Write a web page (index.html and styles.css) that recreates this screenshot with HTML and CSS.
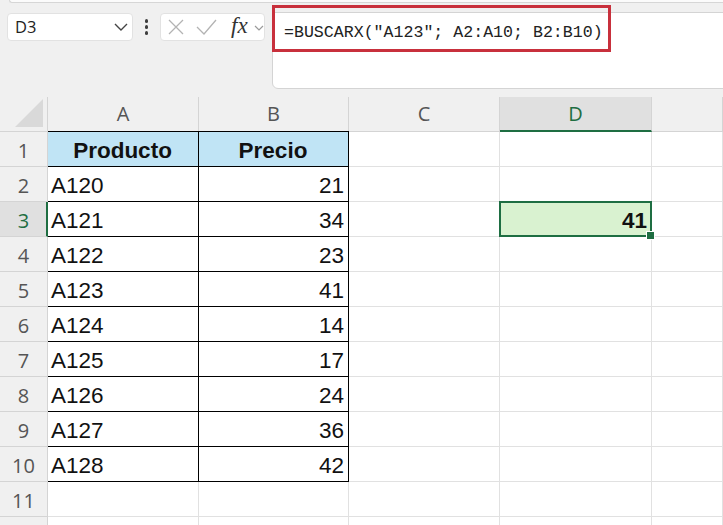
FILE: index.html
```html
<!DOCTYPE html>
<html lang="es">
<head>
<meta charset="utf-8">
<title>BUSCARX</title>
<link rel="stylesheet" href="styles.css">
</head>
<body>
<div class="app">
  <div class="ribbon-edge"></div>
  <div class="fbar">
    <div class="namebox">
      <span class="nb-text">D3</span>
      <svg class="nb-chev" width="14" height="8" viewBox="0 0 14 8"><polyline points="1,1 7,7 13,1" fill="none" stroke="#444" stroke-width="1.4"/></svg>
    </div>
    <div class="dots"><i></i><i></i><i></i></div>
    <div class="fxbox">
      <svg class="ic-x" width="16" height="16" viewBox="0 0 16 16"><path d="M1 1 L15 15 M15 1 L1 15" stroke="#b3b3b3" stroke-width="1.3" fill="none"/></svg>
      <svg class="ic-ok" width="21" height="16" viewBox="0 0 21 16"><polyline points="1,8 8,15 20,1" fill="none" stroke="#b3b3b3" stroke-width="1.3"/></svg>
      <span class="fx">fx</span>
      <svg class="fx-chev" width="10" height="6" viewBox="0 0 10 6"><polyline points="1,1 5,5 9,1" fill="none" stroke="#9a9a9a" stroke-width="1.2"/></svg>
    </div>
    <div class="formula"><span class="ftext">=BUSCARX("A123"; A2:A10; B2:B10)</span></div>
    <div class="highlight"></div>
  </div>

  <div class="sheet">
    <div class="corner"></div>
    <div class="ch">A</div><div class="ch">B</div><div class="ch">C</div><div class="ch sel">D</div><div class="ch"></div>

    <div class="rh">1</div>
    <div class="c t th a top">Producto</div><div class="c t th top">Precio</div><div class="c"></div><div class="c"></div><div class="c"></div>

    <div class="rh">2</div>
    <div class="c t a">A120</div><div class="c t num">21</div><div class="c"></div><div class="c"></div><div class="c"></div>

    <div class="rh sel">3</div>
    <div class="c t a">A121</div><div class="c t num">34</div><div class="c"></div><div class="c cur num">41</div><div class="c"></div>

    <div class="rh">4</div>
    <div class="c t a">A122</div><div class="c t num">23</div><div class="c"></div><div class="c"></div><div class="c"></div>

    <div class="rh">5</div>
    <div class="c t a">A123</div><div class="c t num">41</div><div class="c"></div><div class="c"></div><div class="c"></div>

    <div class="rh">6</div>
    <div class="c t a">A124</div><div class="c t num">14</div><div class="c"></div><div class="c"></div><div class="c"></div>

    <div class="rh">7</div>
    <div class="c t a">A125</div><div class="c t num">17</div><div class="c"></div><div class="c"></div><div class="c"></div>

    <div class="rh">8</div>
    <div class="c t a">A126</div><div class="c t num">24</div><div class="c"></div><div class="c"></div><div class="c"></div>

    <div class="rh">9</div>
    <div class="c t a">A127</div><div class="c t num">36</div><div class="c"></div><div class="c"></div><div class="c"></div>

    <div class="rh">10</div>
    <div class="c t a">A128</div><div class="c t num">42</div><div class="c"></div><div class="c"></div><div class="c"></div>

    <div class="rh">11</div>
    <div class="c"></div><div class="c"></div><div class="c"></div><div class="c"></div><div class="c"></div>

    <div class="rh"></div>
    <div class="c"></div><div class="c"></div><div class="c"></div><div class="c"></div><div class="c"></div>
  </div>
</div>
</body>
</html>
```

FILE: styles.css
```css
* { box-sizing: border-box; }
html, body {
  margin: 0;
  padding: 0;
  width: 723px;
  height: 525px;
  overflow: hidden;
  background: #f0f0f0;
}
.app {
  font-family: "Open Sans", "Noto Sans", sans-serif;
  color: #222;
}
.ribbon-edge {
  height: 3px;
  margin-left: 9px;
  background: #fbfbfb;
  border-bottom: 1px solid #d6d6d6;
  border-left: 1px solid #d6d6d6;
  border-bottom-left-radius: 5px;
}
.fbar {
  position: relative;
  display: flex;
  align-items: flex-start;
  height: 86px;
}
.namebox {
  margin-top: 10px;
  margin-left: 7px;
  width: 126px;
  height: 28px;
  background: #fff;
  border: 1px solid #e2e2e2;
  border-radius: 4px;
  display: flex;
  align-items: center;
  justify-content: space-between;
  padding: 0 4px 0 7px;
}
.nb-text {
  font-size: 16.5px;
  color: #222;
  line-height: 1;
}
.nb-chev { display: block; }
.dots {
  width: 27px;
  height: 28px;
  margin-top: 10px;
  display: flex;
  flex-direction: column;
  align-items: center;
  justify-content: center;
  gap: 2.5px;
}
.dots i {
  display: block;
  width: 3.5px;
  height: 3.5px;
  border-radius: 50%;
  background: #3d3d3d;
}
.fxbox {
  margin-top: 10px;
  width: 105px;
  height: 28px;
  background: #fff;
  border: 1px solid #e2e2e2;
  border-radius: 4px;
  display: flex;
  align-items: center;
  padding-left: 7px;
}
.ic-x { display: block; }
.ic-ok { display: block; margin-left: 12px; }
.fx {
  margin-left: 14px;
  font-family: "Liberation Serif", "DejaVu Serif", serif;
  font-style: italic;
  font-size: 23px;
  line-height: 1;
  color: #333;
  margin-top: -3px;
}
.fx-chev { display: block; margin-left: 6px; margin-top: 1px; }
.formula {
  margin-top: 9px;
  margin-left: 7px;
  flex: 1;
  height: 77px;
  margin-right: -10px;
  background: #fff;
  border: 1px solid #d4d4d4;
  border-bottom-left-radius: 6px;
  padding: 7px 0 0 11px;
}
.ftext {
  font-family: "Liberation Mono", "DejaVu Sans Mono", monospace;
  font-size: 16.6px;
  color: #222;
  white-space: pre;
}
.highlight {
  position: absolute;
  left: 272px;
  top: 2px;
  width: 339px;
  height: 47px;
  border: 3px solid #c8303c;
}
.sheet {
  margin-top: 8px;
  display: grid;
  grid-template-columns: 48px 151px 150px 151px 152px 1fr;
  grid-auto-rows: 35px;
}
.corner {
  position: relative;
  background: #f0f0f0;
  border-right: 1px solid #d4d4d4;
  border-bottom: 1px solid #d4d4d4;
}
.corner::after {
  content: "";
  position: absolute;
  right: 4px;
  bottom: 4px;
  width: 28px;
  height: 28px;
  background: #d9d9d9;
  clip-path: polygon(100% 0, 100% 100%, 0 100%);
}
.ch {
  background: #f0f0f0;
  border-right: 1px solid #d4d4d4;
  border-bottom: 1px solid #d4d4d4;
  font-size: 20px;
  color: #555;
  display: flex;
  align-items: center;
  justify-content: center;
  padding-bottom: 1px;
}
.ch.sel {
  background: #e0e0e0;
  color: #1e6e42;
  border-bottom: 2px solid #1e6e42;
  padding-top: 1px;
}
.rh {
  position: relative;
  background: #f0f0f0;
  border-right: 1px solid #d4d4d4;
  border-bottom: 1px solid #d4d4d4;
  font-size: 20px;
  color: #555;
  display: flex;
  align-items: center;
  justify-content: center;
  padding-top: 2px;
}
.rh.sel {
  z-index: 1;
  background: #e0e0e0;
  color: #1e6e42;
  border-right: 2px solid #1e6e42;
  padding-left: 1px;
}
.c {
  background: #fff;
  border-right: 1px solid #e1e1e1;
  border-bottom: 1px solid #e1e1e1;
  font-family: "Liberation Sans", Arial, sans-serif;
  font-size: 22.5px;
  color: #111;
  display: flex;
  align-items: center;
  padding: 3px 4px 0 3px;
  white-space: nowrap;
}
.c.t {
  border-right-color: #000;
  border-bottom-color: #000;
}
.c.a { box-shadow: -1px 0 0 #000; }
.c.top { box-shadow: 0 -1px 0 #000; }
.c.a.top { box-shadow: -1px 0 0 #000, 0 -1px 0 #000, -1px -1px 0 #000; }
.c.th {
  background: #c0e4f5;
  font-weight: bold;
  justify-content: center;
}
.c.num { justify-content: flex-end; }
.c.cur {
  position: relative;
  z-index: 2;
  background: #d9f2d0;
  font-weight: bold;
}
.c.cur::before {
  content: "";
  position: absolute;
  left: -1px;
  top: -1px;
  right: -1px;
  bottom: -1px;
  border: 2px solid #1e6e42;
}
.c.cur::after {
  content: "";
  position: absolute;
  right: -4px;
  bottom: -4px;
  width: 7px;
  height: 7px;
  background: #1e6e42;
  border: 1px solid #fff;
}
```
